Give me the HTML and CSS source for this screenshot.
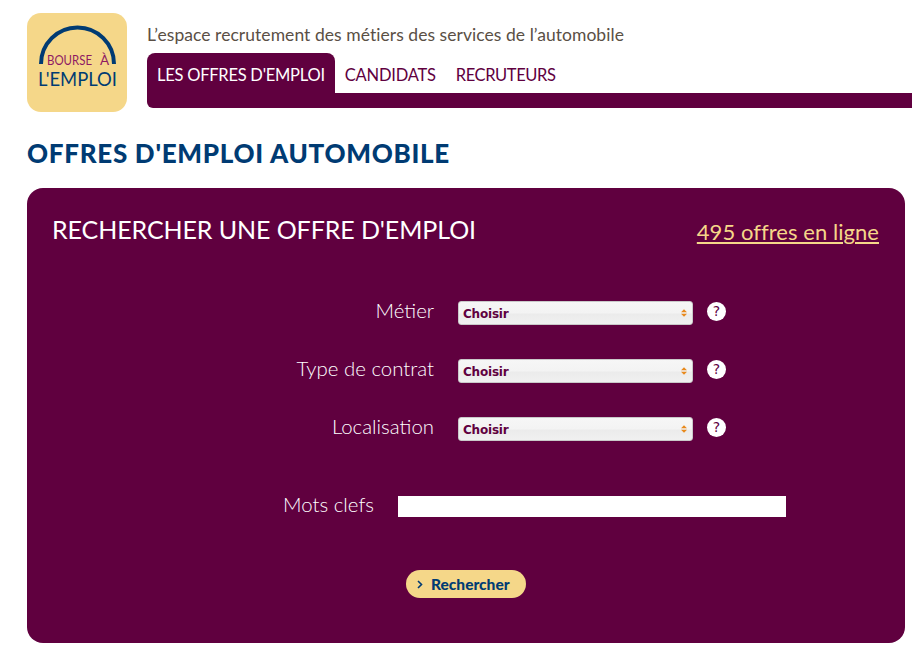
FILE: index.html
```html
<!DOCTYPE html>
<html lang="fr">
<head>
<meta charset="utf-8" />
<title>Bourse à l'emploi - Offres d'emploi automobile</title>
<link rel="stylesheet" href="styles.css">
</head>
<body>
<div id="header">
  <a class="logo" href="#">
    <svg width="100" height="99" viewBox="0 0 100 99">
      <rect width="100" height="99" rx="14" fill="#f5d789"/>
      <path d="M14 51 A36.5 36.5 0 0 1 87 51" fill="none" stroke="#003b73" stroke-width="4"/>
      <text x="20" y="52" class="logo-top" textLength="45" lengthAdjust="spacingAndGlyphs">BOURSE</text>
      <text x="73" y="52" class="logo-top">À</text>
      <text x="11" y="73" class="logo-bottom" textLength="79" lengthAdjust="spacingAndGlyphs">L'EMPLOI</text>
    </svg>
  </a>
  <div class="head-right">
    <p class="tagline">L’espace recrutement des métiers des services de l’automobile</p>
    <div class="nav">
      <a class="tab active" href="#">LES OFFRES D'EMPLOI</a>
      <a class="tab" href="#">CANDIDATS</a>
      <a class="tab" href="#">RECRUTEURS</a>
    </div>
    <div class="nav-bar"></div>
  </div>
</div>

<h1>OFFRES D'EMPLOI AUTOMOBILE</h1>

<div id="search">
  <div class="search-head">
    <h2>RECHERCHER UNE OFFRE D'EMPLOI</h2>
    <a class="count" href="#">495 offres en ligne</a>
  </div>
  <form class="fields">
    <label>Métier</label>
    <div class="select-wrap">
      <select><option>Choisir</option></select>
      <svg class="arrows" width="6" height="8" viewBox="0 0 7 9"><path d="M3.5 0 L7 3.5 H0 Z M3.5 9 L0 5.5 H7 Z" fill="#e8891c"/></svg>
    </div>
    <span class="help">?</span>

    <label>Type de contrat</label>
    <div class="select-wrap">
      <select><option>Choisir</option></select>
      <svg class="arrows" width="6" height="8" viewBox="0 0 7 9"><path d="M3.5 0 L7 3.5 H0 Z M3.5 9 L0 5.5 H7 Z" fill="#e8891c"/></svg>
    </div>
    <span class="help">?</span>

    <label>Localisation</label>
    <div class="select-wrap">
      <select><option>Choisir</option></select>
      <svg class="arrows" width="6" height="8" viewBox="0 0 7 9"><path d="M3.5 0 L7 3.5 H0 Z M3.5 9 L0 5.5 H7 Z" fill="#e8891c"/></svg>
    </div>
    <span class="help">?</span>
  </form>
  <div class="keywords">
    <label>Mots clefs</label>
    <input type="text" />
  </div>
  <button class="submit" type="button">
    <svg width="6" height="9" viewBox="0 0 6 9"><path d="M1 1 L4.5 4.5 L1 8" fill="none" stroke="#003b73" stroke-width="1.6"/></svg>
    Rechercher
  </button>
</div>
</body>
</html>
```

FILE: styles.css
```css
html, body { margin: 0; padding: 0; }
body { background: #fff; font-family: Lato, "Open Sans", sans-serif; width: 912px; height: 654px; overflow: hidden; }

#header { display: flex; padding: 13px 0 0 27px; }
.logo { display: block; width: 100px; height: 99px; }
.logo svg { display: block; }
.logo-top { font-family: Lato, sans-serif; font-size: 13.5px; fill: #8e1a63; }
.logo-bottom { font-family: Lato, sans-serif; font-size: 20px; fill: #003b73; }

.head-right { flex: 1; margin-left: 20px; }
.tagline { margin: 0; height: 40px; padding-top: 10px; box-sizing: border-box; font-size: 17.5px; line-height: 24px; color: #5a4f45; letter-spacing: 0.05px; }
.nav { display: flex; height: 40px; }
.tab { padding: 0 10px; line-height: 44px; font-size: 16.5px; letter-spacing: -0.2px; color: #60003f; text-decoration: none; }
.tab.active { background: #60003f; color: #fff; border-radius: 8px 8px 0 0; letter-spacing: -0.25px; }
.tab:nth-child(3) { letter-spacing: -0.4px; }
.nav-bar { height: 15px; background: #60003f; border-radius: 0 0 0 6px; }

h1 { margin: 25px 0 0 27px; font-size: 26px; line-height: 32px; font-weight: 900; color: #003b73; letter-spacing: 0.72px; }

#search { margin: 19px 0 0 27px; width: 878px; height: 455px; box-sizing: border-box; background: #60003f; border-radius: 16px; padding: 22px 26px 0 25px; color: #fff; }
.search-head { display: flex; justify-content: space-between; height: 91px; }
.search-head h2 { margin: 0; font-size: 25px; line-height: 38px; font-weight: 400; letter-spacing: -0.09px; }
.count { margin-top: 7px; height: 30px; font-size: 22px; line-height: 30px; color: #f5d789; letter-spacing: 0.05px; }

.fields { display: grid; grid-template-columns: 382px 235px 19px; column-gap: 24px; grid-auto-rows: 24px; row-gap: 34px; align-items: center; }
.fields label { text-align: right; margin-top: -6px; }
.fields .help { margin-left: -10px; margin-top: -3px; }
label { font-size: 20.4px; font-weight: 300; color: #fff; line-height: 24px; }

.select-wrap { position: relative; height: 24px; }
.select-wrap select { display: block; appearance: none; width: 100%; height: 24px; margin: 0; padding: 2px 0 0 4px; border: 1px solid #c9c9c9; border-radius: 3px; background: linear-gradient(#f6f6f6 0%, #f3f3f3 50%, #ebebeb 55%, #f0f0f0 100%); font-family: "DejaVu Sans", sans-serif; font-size: 12px; letter-spacing: -0.2px; font-weight: 700; color: #60003f; }
.arrows { position: absolute; right: 6px; top: 8px; }

.help { display: block; width: 19px; height: 19px; border-radius: 50%; background: #fff; color: #60003f; font-family: "DejaVu Sans", sans-serif; font-size: 14px; line-height: 19px; text-align: center; }

.keywords { display: flex; justify-content: flex-start; align-items: center; gap: 24px; margin-top: 55px; }
.keywords label { width: 322px; text-align: right; margin-top: -5px; }
.keywords input { display: block; width: 388px; height: 21px; box-sizing: border-box; border: 0; background: #fff; padding: 0; }

.submit { display: flex; align-items: center; gap: 8px; margin: 53px 0 0 354px; width: 120px; height: 28px; padding: 0 0 0 11px; border: 0; border-radius: 14px; background: #f5d789; color: #003b73; font-family: Lato, sans-serif; font-size: 15.5px; font-weight: 900; }
```
